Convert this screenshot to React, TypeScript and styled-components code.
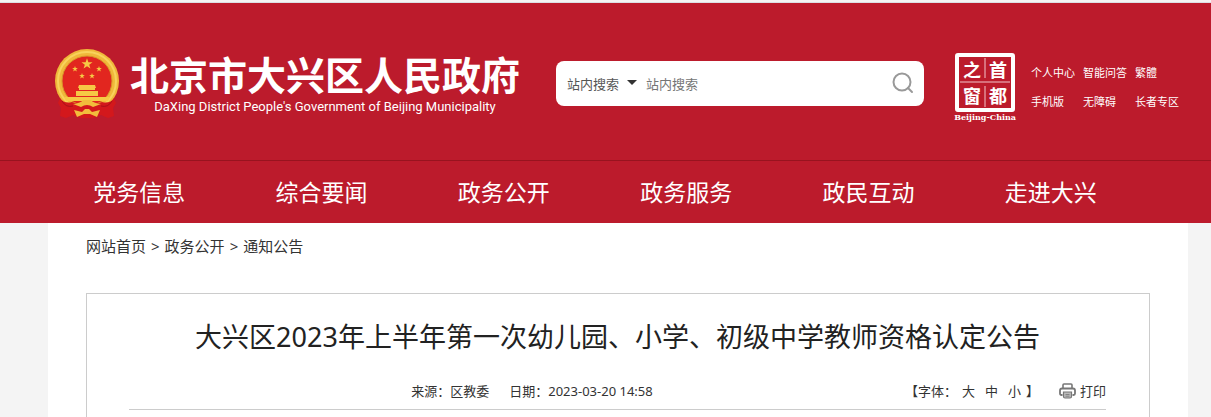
import React from 'react';
import styled, { createGlobalStyle } from 'styled-components';

const red = '#bc1b2c';

const GlobalStyle = createGlobalStyle`
  * { box-sizing: border-box; }
  body {
    margin: 0;
    padding-top: 2px;
    background: #f4f4f4;
    color: #333;
    font-family: "Noto Sans", "Noto Sans CJK SC", sans-serif;
  }
  a { color: inherit; text-decoration: none; }
  h1, p { margin: 0; }
`;

const Header = styled.header`
  background: ${red};
  color: #fff;
  border-top: 1px solid #dcdfe3;
`;

const Banner = styled.div`
  display: flex;
  align-items: center;
  padding: 42px 32px 39px 54px;
`;

const Brand = styled.a`
  display: flex;
  align-items: center;
  gap: 10px;
  flex: none;
`;

const Emblem = styled.svg`
  width: 66px;
  height: 72px;
`;

const BrandText = styled.span`
  display: flex;
  flex-direction: column;
  align-items: center;
`;

const BrandName = styled.span`
  font: bold 39px/48px "Noto Sans CJK SC", sans-serif;
  white-space: nowrap;
`;

const BrandEnglish = styled.span`
  font: 13px/20px Roboto, "Liberation Sans", sans-serif;
  white-space: nowrap;
`;

const SearchForm = styled.form`
  display: flex;
  align-items: center;
  flex: 1;
  height: 45px;
  margin: 0 30px 0 36px;
  padding: 0 10px 0 11px;
  background: #fff;
  border-radius: 8px;
`;

const ScopeField = styled.label`
  position: relative;
  flex: none;
  color: #333;
`;

const ScopeSelect = styled.select`
  appearance: none;
  width: 72px;
  height: 30px;
  padding: 0;
  border: 0;
  background: transparent;
  color: #555;
  font: 13px "Noto Sans CJK SC", sans-serif;
`;

const ScopeArrow = styled.svg`
  position: absolute;
  top: 12px;
  right: 2px;
  width: 10px;
  height: 5px;
  pointer-events: none;
`;

const SearchInput = styled.input`
  flex: 1;
  min-width: 0;
  height: 30px;
  margin-left: 7px;
  padding: 0;
  border: 0;
  outline: 0;
  background: transparent;
  color: #555;
  font: 13px "Noto Sans CJK SC", sans-serif;
  &::placeholder { color: #757575; opacity: 1; }
`;

const SearchButton = styled.button`
  display: flex;
  padding: 0;
  border: 0;
  background: none;
  color: #999;
  cursor: pointer;
`;

const Capital = styled.a`
  display: flex;
  flex-direction: column;
  align-items: center;
  flex: none;
  gap: 1px;
  margin-right: 15px;
  padding-top: 8px;
  font: bold 8px/8px "DejaVu Serif", serif;
`;

const Seal = styled.svg`
  width: 60px;
  height: 59px;
  font: bold 18px "Noto Sans CJK SC", sans-serif;
`;

const QuickLinks = styled.nav`
  display: grid;
  grid-template-columns: repeat(3, max-content);
  gap: 13px 8px;
  flex: none;
  padding-top: 6px;
  font: 11px/16px "Noto Sans CJK SC", sans-serif;
`;

const MainNav = styled.nav`
  display: grid;
  grid-template-columns: repeat(6, 1fr);
  padding: 0 69px 2px 48px;
  border-top: 1px solid #98131f;
`;

const NavLink = styled.a`
  text-align: center;
  font: 23px/60px "Noto Sans CJK SC", sans-serif;
`;

const Page = styled.main`
  margin: 0 23px 0 48px;
  padding: 0 38px;
  background: #fff;
`;

const Breadcrumb = styled.nav`
  display: flex;
  gap: 5px;
  padding: 11px 0 35px;
  font-size: 15px;
  line-height: 24px;
`;

const Article = styled.article`
  min-height: 140px;
  padding: 20px 43px 20px 42px;
  border: 1px solid #ccc;
  border-bottom: 0;
`;

const Title = styled.h1`
  color: #222;
  font-size: 27px;
  font-weight: normal;
  line-height: 46px;
  text-align: center;
`;

const MetaRow = styled.div`
  display: flex;
  align-items: center;
  margin-top: 19px;
  padding-bottom: 6px;
  border-bottom: 1px solid #ccc;
  font-size: 13px;
  line-height: 24px;
`;

const Source = styled.p`
  display: flex;
  flex: 1;
  justify-content: center;
  gap: 20px;
  padding-left: 30px;
`;

const Tools = styled.div`
  display: flex;
  flex: none;
  gap: 20px;
`;

const ToolButton = styled.button<{ $pad?: number }>`
  display: flex;
  align-items: center;
  gap: 4px;
  padding: 0 ${(p) => p.$pad ?? 0}px;
  border: 0;
  background: none;
  color: inherit;
  font: inherit;
  cursor: pointer;
`;

const TextSizes = styled.div`
  display: flex;
`;

const star = 'M0-5 1.2-1.6 4.8-1.6 1.9.6 3 4 0 2-3 4-1.9.6-4.8-1.6-1.2-1.6Z';

const NationalEmblem = () => (
  <Emblem viewBox="0 0 66 72" aria-hidden="true">
    <circle cx="33" cy="34" r="32" fill="#f0b83a" />
    <circle cx="33" cy="34" r="29" fill="none" stroke="#f8d25c" strokeWidth="2" />
    <circle cx="33" cy="34" r="25" fill="#e2261f" stroke="#d9952a" strokeWidth="1" />
    <g fill="#f6c945">
      <path d={star} transform="translate(33 17) scale(1.15)" />
      <path d={star} transform="translate(21 22) scale(.6)" />
      <path d={star} transform="translate(45 22) scale(.6)" />
      <path d={star} transform="translate(28 29) scale(.6)" />
      <path d={star} transform="translate(38 29) scale(.6)" />
      <path d="M25 38h16l1 3h-1v2H25v-2h-1ZM22 44h22v5H22ZM10 50h46l-2 4H12Z" />
    </g>
    <path d="M6 51q4 6 12 4l9 3h12l9-3q8 2 12-4l2 5-3 5 1 8-6 2-7-3-8 3H27l-8-3-7 3-6-2 1-8-3-5Z" fill="#d3181c" />
    <path d="M8 54q4 7 11 5M58 54q-4 7-11 5" fill="none" stroke="#a91018" strokeWidth="1" />
    <path d="M19 57q8-1 10-4h8q2 3 10 4l-8 3q-3-2-6-2t-6 2Z" fill="#f2bd3c" />
    <path d="M20 63 28 65 31 62h4l3 3 8-2-3 7-7-3h-6l-7 3Z" fill="#f2bd3c" />
  </Emblem>
);

const PrinterIcon = () => (
  <svg width="17" height="16" viewBox="0 0 17 16" fill="none" stroke="#777" aria-hidden="true">
    <path d="M4 5V2q0-1 1-1h7q1 0 1 1v3" strokeWidth="1.6" />
    <path d="M3.5 12h-1Q1 12 1 10.5v-3q0-2 2-2h11q2 0 2 2v3q0 1.500-1.500 1.500h-1" strokeWidth="1.8" />
    <path d="M4.500 9h8v4.500q0 1.500-1.500 1.500H6q-1.500 0-1.500-1.500Z" fill="#bbb" strokeWidth="1.2" />
    <path d="M6.500 11.500h4M6.500 13.200h4" strokeWidth=".8" />
  </svg>
);

const nav = ['党务信息', '综合要闻', '政务公开', '政务服务', '政民互动', '走进大兴'];
const quick = ['个人中心', '智能问答', '繁體', '手机版', '无障碍', '长者专区'];

export default function App() {
  return (
    <>
      <GlobalStyle />
      <Header>
        <Banner>
          <Brand href="#">
            <NationalEmblem />
            <BrandText>
              <BrandName>北京市大兴区人民政府</BrandName>
              <BrandEnglish>DaXing District People's Government of Beijing Municipality</BrandEnglish>
            </BrandText>
          </Brand>
          <SearchForm onSubmit={(e) => e.preventDefault()}>
            <ScopeField>
              <ScopeSelect aria-label="搜索范围">
                <option>站内搜索</option>
              </ScopeSelect>
              <ScopeArrow viewBox="0 0 10 5"><path d="M0 0h10L5 5Z" fill="#333" /></ScopeArrow>
            </ScopeField>
            <SearchInput type="text" aria-label="站内搜索" placeholder="站内搜索" />
            <SearchButton type="submit" aria-label="搜索">
              <svg width="22" height="22" viewBox="0 0 22 22" fill="none" stroke="currentColor" strokeWidth="2">
                <circle cx="10" cy="10" r="8.5" />
                <path d="m16 16 4 4" strokeLinecap="round" />
              </svg>
            </SearchButton>
          </SearchForm>
          <Capital href="#">
            <Seal viewBox="0 0 60 59" fill="#fff">
              <rect x="2" y="2" width="56" height="55" rx="1" fill="none" stroke="#fff" strokeWidth="4" />
              <path d="M30 5v20M30 33v21M5 29h50" stroke="#f3c5ca" strokeWidth="1" />
              <text x="8" y="24">之</text>
              <text x="34" y="24">首</text>
              <text x="8" y="50">窗</text>
              <text x="34" y="50">都</text>
            </Seal>
            Beijing-China
          </Capital>
          <QuickLinks aria-label="快捷入口">
            {quick.map((q) => <a href="#" key={q}>{q}</a>)}
          </QuickLinks>
        </Banner>
        <MainNav>
          {nav.map((n) => <NavLink href="#" key={n}>{n}</NavLink>)}
        </MainNav>
      </Header>
      <Page>
        <Breadcrumb>
          <a href="#">网站首页</a><span>&gt;</span>
          <a href="#">政务公开</a><span>&gt;</span>
          <a href="#">通知公告</a>
        </Breadcrumb>
        <Article>
          <Title>大兴区2023年上半年第一次幼儿园、小学、初级中学教师资格认定公告</Title>
          <MetaRow>
            <Source>
              <span>来源：区教委</span>
              <span>日期：2023-03-20 14:58</span>
            </Source>
            <Tools>
              <TextSizes>
                <span>【字体：</span>
                <ToolButton type="button" $pad={5}>大</ToolButton>
                <ToolButton type="button" $pad={5}>中</ToolButton>
                <ToolButton type="button" $pad={5}>小</ToolButton>
                <span>】</span>
              </TextSizes>
              <ToolButton type="button">
                <PrinterIcon />
                打印
              </ToolButton>
            </Tools>
          </MetaRow>
        </Article>
      </Page>
    </>
  );
}
